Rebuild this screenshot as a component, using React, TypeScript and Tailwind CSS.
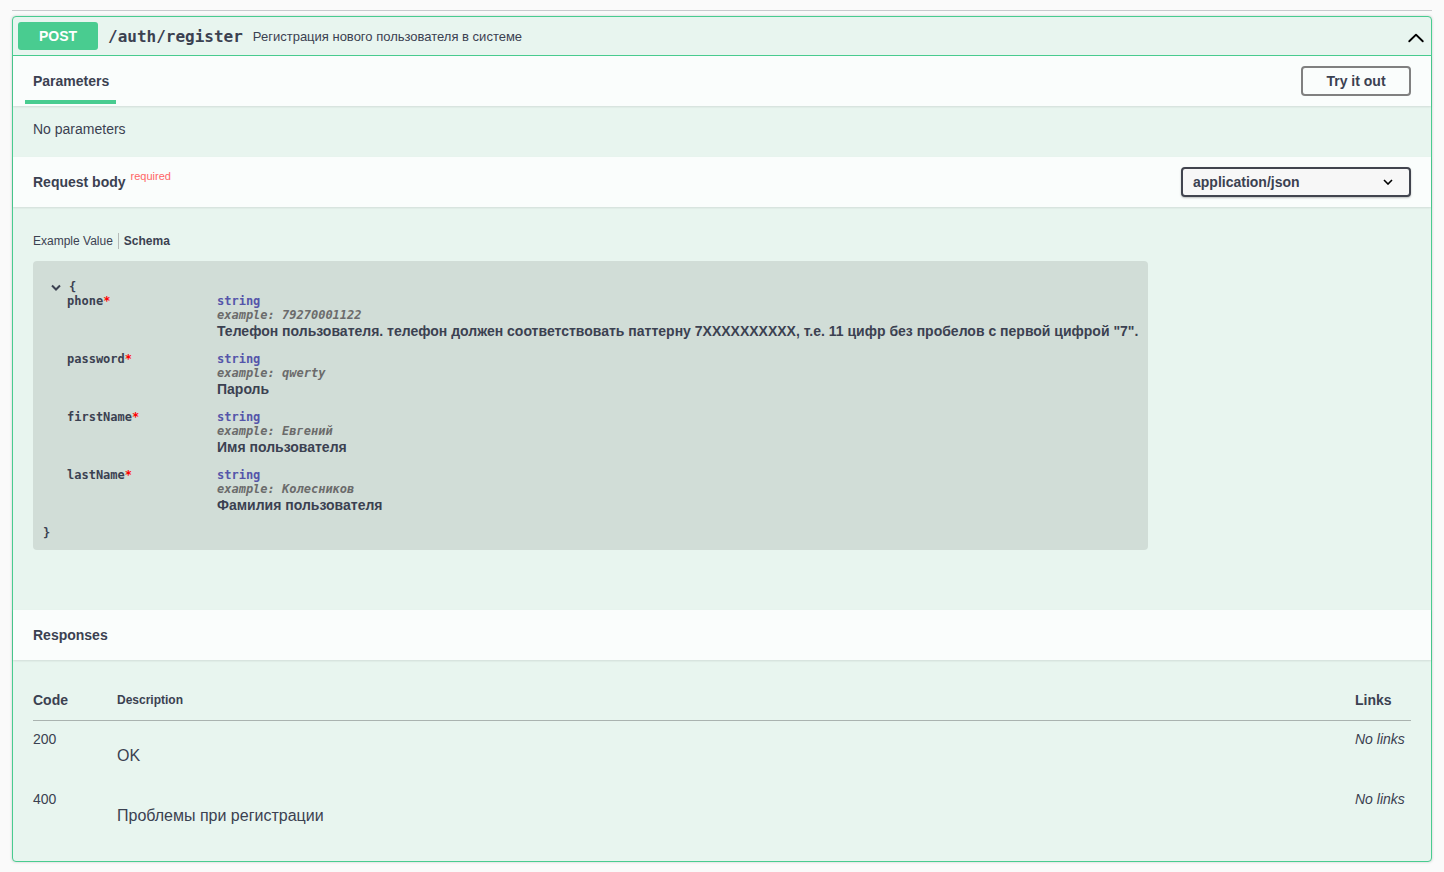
import React from "react";

type Prop = {
  name: string;
  example: string;
  description: string;
};

const props: Prop[] = [
  {
    name: "phone",
    example: "79270001122",
    description:
      'Телефон пользователя. телефон должен соответствовать паттерну 7XXXXXXXXXX, т.е. 11 цифр без пробелов с первой цифрой "7".',
  },
  { name: "password", example: "qwerty", description: "Пароль" },
  { name: "firstName", example: "Евгений", description: "Имя пользователя" },
  { name: "lastName", example: "Колесников", description: "Фамилия пользователя" },
];

const responses = [
  { code: "200", description: "OK" },
  { code: "400", description: "Проблемы при регистрации" },
];

const sans = "font-['Liberation_Sans',Arial,sans-serif]";
const mono = "font-['DejaVu_Sans_Mono',monospace]";

function SectionHeader({ children }: { children: React.ReactNode }) {
  return (
    <div className="relative flex h-[50px] items-center justify-between bg-white/80 px-[20px] shadow-[0_1px_2px_rgba(0,0,0,0.1)]">
      {children}
    </div>
  );
}

export default function App() {
  return (
    <div className={`min-h-screen bg-[#fafafa] px-[12px] text-[#3b4151] ${sans}`}>
      <div className="h-[11px] border-b border-[#c9cacd]" />

      {/* Operation block */}
      <div className="mt-[5px] rounded-[4px] border border-[#49cc90] bg-[#e8f5ef] shadow-[0_0_3px_rgba(0,0,0,0.19)]">
        {/* Summary */}
        <div className="flex items-center border-b border-[#49cc90] py-[5px] pl-[5px]">
          <span className="flex h-[28px] w-[80px] items-center justify-center rounded-[3px] bg-[#49cc90] text-[14px] font-bold text-white">
            POST
          </span>
          <span className={`ml-[10px] mt-[2px] text-[16px] font-bold ${mono}`}>/auth/register</span>
          <span className="ml-[10px] mt-[2px] text-[13px]">Регистрация нового пользователя в системе</span>
          <svg
            className="ml-auto mr-[5px] mt-[2px]"
            width="20"
            height="20"
            viewBox="0 0 20 20"
            fill="#000"
          >
            <path d="M17.418 14.908c-.363.36-.947.36-1.31 0L10 8.896l-6.108 6.012c-.363.36-.947.36-1.31 0a.91.91 0 0 1 0-1.297l6.763-6.66a.929.929 0 0 1 1.31 0l6.763 6.66a.91.91 0 0 1 0 1.297z" />
          </svg>
        </div>

        {/* Parameters */}
        <SectionHeader>
          <div className="text-[14px] font-bold">Parameters</div>
          <div className="absolute left-[12px] top-[44px] h-[4px] w-[91px] bg-[#49cc90]" />
          <button className="flex h-[30px] w-[110px] items-center justify-center rounded-[4px] border-2 border-[#808080] text-[14px] font-bold text-[#3b4151]">
            Try it out
          </button>
        </SectionHeader>
        <div className="h-[51px] px-[20px] pt-[13px] text-[14px] leading-[20px]">No parameters</div>

        {/* Request body */}
        <SectionHeader>
          <div className="flex items-start">
            <span className="text-[14px] font-bold">Request body</span>
            <span className="-mt-[4px] ml-[5px] text-[11px] text-[#ff6666]">required</span>
          </div>
          <div className="flex h-[30px] w-[230px] items-center justify-between rounded-[4px] border-2 border-[#41444e] bg-[#f7f7f7] pl-[10px] pr-[16px] text-[14px] font-bold shadow-[0_1px_2px_rgba(0,0,0,0.25)]">
            <span>application/json</span>
            <svg width="10" height="6" viewBox="0 0 10 6" fill="none" stroke="#000" strokeWidth="1.6">
              <path d="M1 1l4 4 4-4" />
            </svg>
          </div>
        </SectionHeader>
        <div className="px-[20px] pb-[60px] pt-[26px]">
          <div className="flex items-center text-[12px] leading-[16px]">
            <span>Example Value</span>
            <span className="mx-[5px] h-[16px] w-px bg-[#b5bab8]" />
            <span className="font-bold">Schema</span>
          </div>
          <div className={`mt-[12px] w-fit rounded-[4px] bg-[#d1ddd7] px-[10px] pb-[10px] pt-[19px] text-[12px] font-bold leading-[14px] ${mono}`}>
            <div className="flex items-center pl-[8px]">
              <svg width="10" height="7" viewBox="0 0 10 7" fill="none" stroke="#3b4151" strokeWidth="2">
                <path d="M1 1.5l4 4 4-4" />
              </svg>
              <span className="ml-[8px]">{"{"}</span>
            </div>
            {props.map((p) => (
              <div key={p.name} className="flex pb-[12px] pl-[24px]">
                <div className="w-[150px] shrink-0">
                  {p.name}
                  <span className="text-[#ff0000]">*</span>
                </div>
                <div>
                  <div className="text-[#55a]">string</div>
                  <div className="italic text-[#6b6b6b]">example: {p.example}</div>
                  <div className={`whitespace-nowrap text-[14px] font-bold leading-[18px] ${sans}`}>
                    {p.description}
                  </div>
                </div>
              </div>
            ))}
            <div>{"}"}</div>
          </div>
        </div>

        {/* Responses */}
        <SectionHeader>
          <div className="text-[14px] font-bold">Responses</div>
        </SectionHeader>
        <div className="px-[20px] pb-[20px] pt-[20px]">
          <div className="grid h-[41px] grid-cols-[84px_1fr_56px] items-center border-b border-[#aab3b0]">
            <span className="text-[14px] font-bold">Code</span>
            <span className="text-[12px] font-bold">Description</span>
            <span className="text-[14px] font-bold">Links</span>
          </div>
          {responses.map((r) => (
            <div key={r.code} className="grid h-[60px] grid-cols-[84px_1fr_56px] items-start">
              <span className="pt-[10px] text-[14px] leading-[16px]">{r.code}</span>
              <span className="pt-[26px] text-[16px] leading-[18px]">{r.description}</span>
              <span className="pt-[10px] text-[14px] italic leading-[16px]">No links</span>
            </div>
          ))}
        </div>
      </div>
    </div>
  );
}
